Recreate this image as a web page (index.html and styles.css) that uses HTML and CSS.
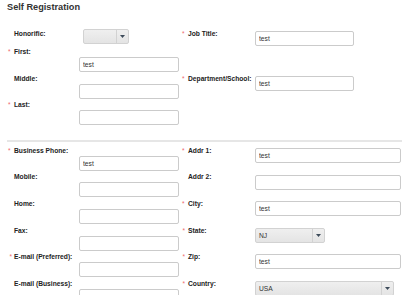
FILE: index.html
```html
<!DOCTYPE html>
<html lang="en">
<head>
    <meta charset="UTF-8">
    <meta name="viewport" content="width=device-width, initial-scale=1.0">
    <title>Self Registration</title>
    <link rel="stylesheet" href="styles.css">
</head>
<body>
    <div class="page">
        <h1 class="title">Self Registration</h1>

        <div class="section">
            <div class="row row-first">
                <div class="field">
                    <span class="req"></span>
                    <label for="honorific">Honorific:</label>
                    <div class="ctrl ctrl-flush">
                        <div class="dropdown dd-honorific" id="honorific">
                            <span class="dd-value"></span>
                            <span class="dd-arrow"><svg width="5" height="3" viewBox="0 0 5 3"><path d="M0 0H5L2.5 3Z" fill="#3d4b5a"/></svg></span>
                        </div>
                    </div>
                </div>
                <div class="field field-right">
                    <span class="req">*</span>
                    <label for="job-title">Job Title:</label>
                    <div class="ctrl"><input type="text" class="input input-short" id="job-title" value="test"></div>
                </div>
            </div>

            <div class="row">
                <div class="field">
                    <span class="req">*</span>
                    <label for="first">First:</label>
                    <div class="ctrl"><input type="text" class="input" id="first" value="test"></div>
                </div>
            </div>

            <div class="row">
                <div class="field">
                    <span class="req"></span>
                    <label for="middle">Middle:</label>
                    <div class="ctrl"><input type="text" class="input" id="middle"></div>
                </div>
                <div class="field field-right">
                    <span class="req">*</span>
                    <label for="dept">Department/School:</label>
                    <div class="ctrl"><input type="text" class="input input-short" id="dept" value="test"></div>
                </div>
            </div>

            <div class="row">
                <div class="field">
                    <span class="req">*</span>
                    <label for="last">Last:</label>
                    <div class="ctrl"><input type="text" class="input" id="last"></div>
                </div>
            </div>
        </div>

        <hr class="divider">

        <div class="section">
            <div class="row">
                <div class="field">
                    <span class="req">*</span>
                    <label for="phone">Business Phone:</label>
                    <div class="ctrl"><input type="text" class="input" id="phone" value="test"></div>
                </div>
                <div class="field field-right">
                    <span class="req">*</span>
                    <label for="addr1">Addr 1:</label>
                    <div class="ctrl"><input type="text" class="input input-wide" id="addr1" value="test"></div>
                </div>
            </div>

            <div class="row">
                <div class="field">
                    <span class="req"></span>
                    <label for="mobile">Mobile:</label>
                    <div class="ctrl"><input type="text" class="input" id="mobile"></div>
                </div>
                <div class="field field-right">
                    <span class="req"></span>
                    <label for="addr2">Addr 2:</label>
                    <div class="ctrl"><input type="text" class="input input-wide" id="addr2"></div>
                </div>
            </div>

            <div class="row">
                <div class="field">
                    <span class="req"></span>
                    <label for="home">Home:</label>
                    <div class="ctrl"><input type="text" class="input" id="home"></div>
                </div>
                <div class="field field-right">
                    <span class="req">*</span>
                    <label for="city">City:</label>
                    <div class="ctrl"><input type="text" class="input input-wide" id="city" value="test"></div>
                </div>
            </div>

            <div class="row">
                <div class="field">
                    <span class="req"></span>
                    <label for="fax">Fax:</label>
                    <div class="ctrl"><input type="text" class="input" id="fax"></div>
                </div>
                <div class="field field-right">
                    <span class="req req-in">*</span>
                    <label for="state">State:</label>
                    <div class="ctrl">
                        <div class="dropdown dd-state" id="state">
                            <span class="dd-value">NJ</span>
                            <span class="dd-arrow"><svg width="5" height="3" viewBox="0 0 5 3"><path d="M0 0H5L2.5 3Z" fill="#3d4b5a"/></svg></span>
                        </div>
                    </div>
                </div>
            </div>

            <div class="row">
                <div class="field">
                    <span class="req req-in">*</span>
                    <label for="email-pref">E-mail (Preferred):</label>
                    <div class="ctrl"><input type="text" class="input" id="email-pref"></div>
                </div>
                <div class="field field-right">
                    <span class="req req-in">*</span>
                    <label for="zip">Zip:</label>
                    <div class="ctrl"><input type="text" class="input input-wide" id="zip" value="test"></div>
                </div>
            </div>

            <div class="row">
                <div class="field">
                    <span class="req"></span>
                    <label for="email-bus">E-mail (Business):</label>
                    <div class="ctrl"><input type="text" class="input" id="email-bus"></div>
                </div>
                <div class="field field-right">
                    <span class="req req-in">*</span>
                    <label for="country">Country:</label>
                    <div class="ctrl">
                        <div class="dropdown dd-country" id="country">
                            <span class="dd-value">USA</span>
                            <span class="dd-arrow"><svg width="5" height="3" viewBox="0 0 5 3"><path d="M0 0H5L2.5 3Z" fill="#3d4b5a"/></svg></span>
                        </div>
                    </div>
                </div>
            </div>
        </div>
    </div>
</body>
</html>
```

FILE: styles.css
```css
* {
    margin: 0;
    padding: 0;
    box-sizing: border-box;
    font-family: 'Liberation Sans', Arial, sans-serif;
}

body {
    background: #fff;
    color: #222;
}

.page {
    padding: 1px 17px 0 7px;
}

.title {
    font-size: 9.2px;
    line-height: 13px;
    font-weight: bold;
    color: #333;
}

.section {
    margin-top: 15px;
}

.row {
    display: grid;
    grid-template-columns: 173px 1fr;
    height: 26.6px;
}

.row-first {
    height: 18px;
}

.field {
    display: grid;
    grid-template-columns: 7px 65px auto;
    align-items: start;
}

.field-right {
    grid-template-columns: 8px 67px auto;
}

.req {
    font-size: 6.5px;
    line-height: 9px;
    color: #f0676b;
    padding-left: 1px;
}

.field-right .req {
    padding-left: 2px;
}

.field-right .req-in {
    padding-left: 3.5px;
}

.field .req-in {
    padding-left: 2.5px;
}

label {
    font-size: 6.7px;
    line-height: 9px;
    font-weight: bold;
    color: #222;
    white-space: nowrap;
}

.ctrl {
    margin-top: 10px;
}

.field-right .ctrl {
    margin-top: 2.3px;
}

.ctrl-flush {
    margin-top: 0;
}

.input {
    display: block;
    width: 100px;
    height: 15px;
    padding: 0 3px;
    border: 1px solid #cbcbcb;
    border-radius: 2px;
    background: #fff;
    font-size: 6.7px;
    color: #333;
    outline: none;
}

.input-short {
    width: 99px;
}

.input-wide {
    width: 146px;
}

.dropdown {
    display: flex;
    height: 15px;
    border: 1px solid #d2d2d2;
    border-radius: 2px;
    background: linear-gradient(#efefef, #e4e4e4);
    font-size: 6.7px;
    color: #333;
}

.dd-value {
    flex: 1;
    padding-left: 3px;
    line-height: 13px;
}

.dd-arrow {
    width: 12px;
    display: flex;
    align-items: center;
    justify-content: center;
    border-left: 1px solid #d2d2d2;
}

.dd-honorific {
    width: 46px;
    margin-left: 4px;
}

.dd-state {
    width: 70px;
}

.dd-country {
    width: 139px;
}

.divider {
    border: none;
    border-top: 2px solid #e6e6e6;
    margin-top: 13px;
}

.divider + .section {
    margin-top: 4px;
}
```
